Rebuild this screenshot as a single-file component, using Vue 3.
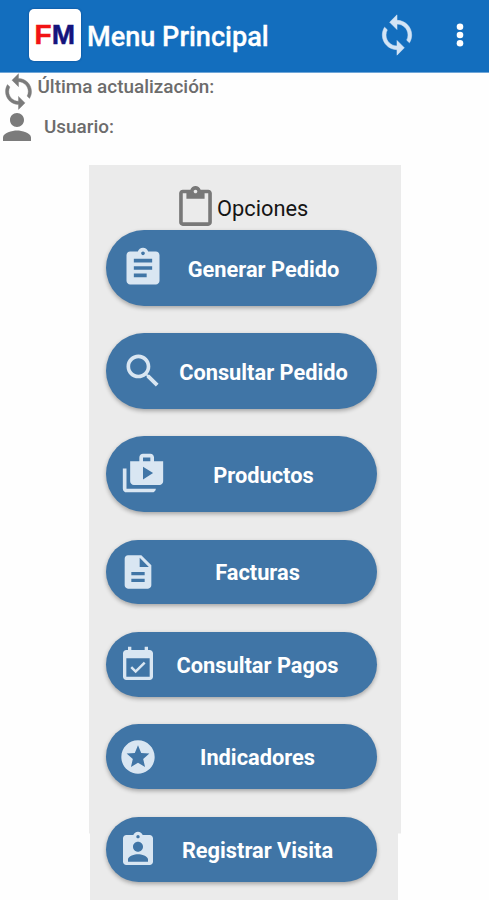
<script setup>
import { ref } from 'vue'

const SYNC =
  'M12 4V1L8 5l4 4V6c3.31 0 6 2.69 6 6 0 1.01-.25 1.97-.7 2.8l1.46 1.46C19.54 15.03 20 13.57 20 12c0-4.42-3.58-8-8-8zm0 14c-3.31 0-6-2.69-6-6 0-1.01.25-1.97.7-2.8L5.24 7.74C4.46 8.97 4 10.43 4 12c0 4.42 3.58 8 8 8v3l4-4-4-4v3z'

// large: botones principales, más altos que el resto
const options = ref([
  {
    label: 'Generar Pedido',
    large: true,
    icon: 'M19 3h-4.18C14.4 1.84 13.3 1 12 1c-1.3 0-2.4.84-2.82 2H5c-1.1 0-2 .9-2 2v14c0 1.1.9 2 2 2h14c1.1 0 2-.9 2-2V5c0-1.1-.9-2-2-2zm-7 0c.55 0 1 .45 1 1s-.45 1-1 1-1-.45-1-1 .45-1 1-1zm2 14H7v-2h7v2zm3-4H7v-2h10v2zm0-4H7V7h10v2z'
  },
  {
    label: 'Consultar Pedido',
    large: true,
    icon: 'M15.5 14h-.79l-.28-.27C15.41 12.59 16 11.11 16 9.5 16 5.91 13.09 3 9.5 3S3 5.91 3 9.5 5.91 16 9.5 16c1.61 0 3.09-.59 4.23-1.57l.27.28v.79l5 4.99L20.49 19l-4.99-5zm-6 0C7.01 14 5 11.99 5 9.5S7.01 5 9.5 5 14 7.01 14 9.5 11.99 14 9.5 14z'
  },
  {
    label: 'Productos',
    large: true,
    icon: 'M3 9H1v11c0 1.11.89 2 2 2h14c1.11 0 2-.89 2-2H3V9zm15-4V3c0-1.11-.89-2-2-2h-4c-1.11 0-2 .89-2 2v2H5v11c0 1.11.89 2 2 2h14c1.11 0 2-.89 2-2V5h-5zm-6-2h4v2h-4V3zm0 12V8l5.5 3.5L12 15z'
  },
  {
    label: 'Facturas',
    icon: 'M14 2H6c-1.1 0-1.99.9-1.99 2L4 20c0 1.1.89 2 1.99 2H18c1.1 0 2-.9 2-2V8l-6-6zm2 16H8v-2h8v2zm0-4H8v-2h8v2zm-3-5V3.5L18.5 9H13z'
  },
  {
    label: 'Consultar Pagos',
    icon: 'M16.53 11.06L15.47 10l-4.88 4.88-2.12-2.12-1.06 1.06L10.59 17l5.94-5.94zM19 3h-1V1h-2v2H8V1H6v2H5c-1.11 0-1.99.9-1.99 2L3 19c0 1.1.89 2 2 2h14c1.1 0 2-.9 2-2V5c0-1.1-.9-2-2-2zm0 16H5V8h14v11z'
  },
  {
    label: 'Indicadores',
    icon: 'M11.99 2C6.47 2 2 6.48 2 12s4.47 10 9.99 10C17.52 22 22 17.52 22 12S17.52 2 11.99 2zm4.24 16L12 15.45 7.77 18l1.12-4.81-3.73-3.23 4.92-.42L12 5l1.92 4.53 4.92.42-3.73 3.23L16.23 18z'
  },
  {
    label: 'Registrar Visita',
    icon: 'M19 3h-4.18C14.4 1.84 13.3 1 12 1c-1.3 0-2.4.84-2.82 2H5c-1.1 0-2 .9-2 2v14c0 1.1.9 2 2 2h14c1.1 0 2-.9 2-2V5c0-1.1-.9-2-2-2zm-7 0c.55 0 1 .45 1 1s-.45 1-1 1-1-.45-1-1 .45-1 1-1zm0 4c1.66 0 3 1.34 3 3s-1.34 3-3 3-3-1.34-3-3 1.34-3 3-3zm6 12H6v-1.4c0-2 4-3.1 6-3.1s6 1.1 6 3.1V19z'
  }
])
</script>

<template>
  <div class="screen">
    <header class="bar">
      <div class="bar__logo"><span class="red">F</span><span class="navy">M</span></div>
      <h1 class="bar__title">Menu Principal</h1>
      <button type="button" class="bar__btn bar__sync" aria-label="Sincronizar">
        <svg viewBox="0 0 24 24"><path :d="SYNC" /></svg>
      </button>
      <button type="button" class="bar__btn bar__more" aria-label="Más opciones">
        <svg viewBox="0 0 8 24">
          <circle cx="4" cy="3.8" r="3.3" />
          <circle cx="4" cy="12" r="3.3" />
          <circle cx="4" cy="20.2" r="3.3" />
        </svg>
      </button>
    </header>

    <section class="info">
      <div class="info__row">
        <svg class="info__sync" viewBox="0 0 24 24"><path :d="SYNC" /></svg>
        <span class="info__update">Última actualización:</span>
      </div>
      <div class="info__row info__row--user">
        <svg class="info__person" viewBox="4 4 16 16">
          <path d="M12 12c2.21 0 4-1.79 4-4s-1.79-4-4-4-4 1.79-4 4 1.79 4 4 4zm0 2c-2.67 0-8 1.34-8 4v2h16v-2c0-2.66-5.33-4-8-4z" />
        </svg>
        <span class="info__user">Usuario:</span>
      </div>
    </section>

    <main class="panel">
      <div class="panel__head">
        <svg viewBox="3 0 18 22">
          <path d="M19 2h-4.18C14.4.84 13.3 0 12 0c-1.3 0-2.4.84-2.82 2H5c-1.1 0-2 .9-2 2v16c0 1.1.9 2 2 2h14c1.1 0 2-.9 2-2V4c0-1.1-.9-2-2-2zm-7 0c.55 0 1 .45 1 1s-.45 1-1 1-1-.45-1-1 .45-1 1-1zm7 18H5V4h2v3h10V4h2v16z" />
        </svg>
        <h2>Opciones</h2>
      </div>
      <button
        v-for="option in options"
        :key="option.label"
        type="button"
        class="option"
        :class="{ 'option--large': option.large }"
      >
        <svg viewBox="0 0 24 24"><path :d="option.icon" /></svg>
        <span>{{ option.label }}</span>
      </button>
    </main>
  </div>
</template>

<style>
body {
  background: #fff;
  overflow: hidden;
}
</style>

<style scoped>
.screen {
  height: 900px;
  overflow: hidden;
  display: flex;
  flex-direction: column;
  background: #fefefe;
  font-family: Roboto, 'Liberation Sans', sans-serif;
}
svg {
  display: block;
  flex: none;
  fill: currentColor;
}
button {
  border: none;
  padding: 0;
  font-family: inherit;
  cursor: pointer;
}
.bar {
  flex: none;
  box-sizing: border-box;
  height: 73px;
  display: flex;
  align-items: center;
  padding: 0 25.5px 2px 28.5px;
  background: #136ebe;
  border-bottom: 1px solid #6fa6d8;
  color: #fff;
}
.bar__logo {
  width: 52.5px;
  height: 52px;
  border-radius: 5px;
  background: #fff;
  display: flex;
  align-items: center;
  justify-content: center;
  box-shadow: 0 0 2px rgba(0, 30, 80, 0.5);
  font: bold 28px/52px 'Liberation Sans', sans-serif;
  -webkit-text-stroke: 0.5px;
}
.red {
  color: #f21313;
}
.navy {
  color: #14147c;
}
.bar__title {
  margin: 4px 0 0 6px;
  font-size: 27.1px;
  font-weight: 500;
  line-height: 32px;
  -webkit-text-stroke: 0.3px;
}
.bar__btn {
  background: none;
  color: #fff;
}
.bar__sync {
  margin-left: auto;
  color: #d3e4f5;
}
.bar__sync svg {
  width: 44px;
  height: 44px;
  stroke: currentColor;
  stroke-width: 0.3;
}
.bar__more {
  margin-left: 37px;
}
.bar__more svg {
  width: 8px;
  height: 24px;
}
.info {
  flex: none;
  height: 91.5px;
  color: #6c6c6c;
  font-size: 18.9px;
  font-weight: 500;
  line-height: 22px;
}
.info__row {
  display: flex;
  height: 38px;
}
.info__sync {
  width: 39px;
  height: 39px;
  margin: -1px 0 0 -1px;
  color: #7b7b7b;
  stroke: currentColor;
  stroke-width: 0.25;
}
.info__update {
  margin: 3px 0 0 -0.5px;
}
.info__row--user {
  padding: 2px 0 0 3px;
}
.info__person {
  width: 28px;
  height: 28px;
  margin-top: -0.5px;
  color: #7b7b7b;
}
.info__user {
  margin: 3px 0 0 13px;
}
.panel {
  flex: 1;
  box-sizing: border-box;
  width: 312px;
  margin-left: 89px;
  padding: 21.5px 24px 0 17px;
  background: #ebebeb;
  /* el panel se estrecha un poco en la parte inferior */
  clip-path: polygon(0 0, 100% 0, 100% 669px, 309px 669px, 309px 100%, 1px 100%, 1px 669px, 0 669px);
}
.panel__head {
  display: flex;
  height: 44px;
  padding-left: 73px;
  color: #787878;
}
.panel__head svg {
  width: 33px;
  height: 40px;
}
.panel__head h2 {
  margin: 10px 0 0 5px;
  color: #151515;
  font-size: 21.8px;
  font-weight: 400;
  line-height: 26px;
}
.option {
  box-sizing: border-box;
  width: 271px;
  height: 64.8px;
  margin-bottom: 27.6px;
  padding: 1px 20px 0 12px;
  display: flex;
  align-items: center;
  border-radius: 38px;
  background: #4075a6;
  box-shadow: 0 2px 4px rgba(0, 0, 0, 0.3);
  color: #fff;
  font-size: 21.8px;
  font-weight: 700;
}
.option--large {
  height: 75.6px;
  padding: 1.5px 15px 0 15px;
}
.option svg {
  width: 40px;
  height: 40px;
  color: #d9e6f2;
}
.option--large svg {
  width: 44px;
  height: 44px;
  margin-top: -1.5px;
}
.option span {
  flex: 1;
  padding-top: 1px;
  text-align: center;
  white-space: nowrap;
}
</style>
